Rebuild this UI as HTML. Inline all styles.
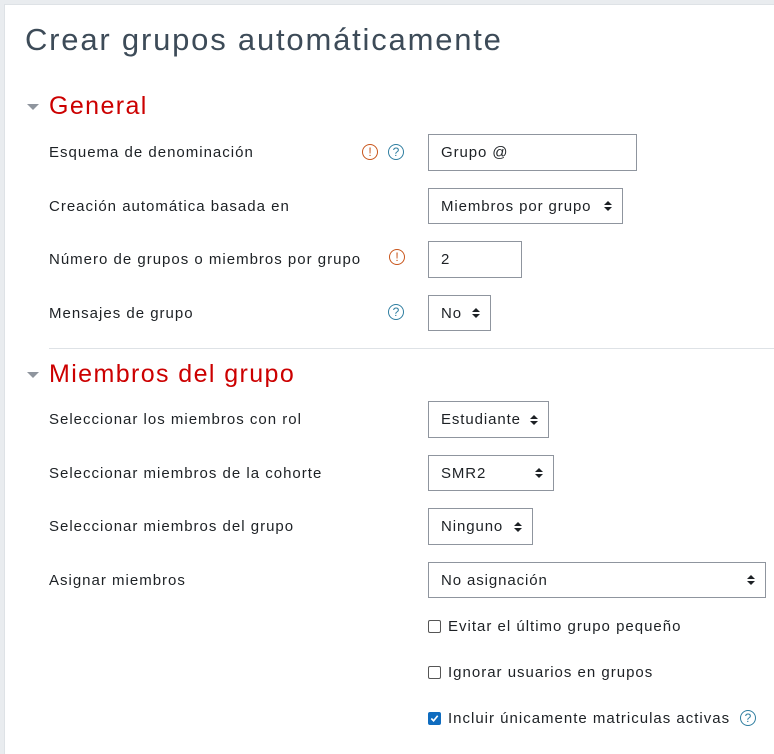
<!DOCTYPE html>
<html><head><meta charset="utf-8"><style>
body{margin:0;width:774px;height:754px;background:#e9ecef;font-family:"Liberation Sans",sans-serif;overflow:hidden;position:relative}
.card{position:absolute;left:4px;top:4px;right:0;bottom:0;background:#fff;border-left:1px solid #dee2e6;border-top:1px solid #dee2e6}
.a{position:absolute;white-space:nowrap}
h1{position:absolute;left:25px;top:22px;margin:0;font-weight:normal;font-size:31px;color:#3d4b58;letter-spacing:1.8px}
.h{font-size:25px;color:#cc0000;left:49px;letter-spacing:1.4px}
.tri{position:absolute;left:27px;width:0;height:0;border-left:6px solid transparent;border-right:6px solid transparent;border-top:6px solid #8f959e}
.l{left:49px;font-size:15px;color:#1d2125;letter-spacing:1px}
.f{position:absolute;border:1px solid #8f959e;box-sizing:border-box;font-size:15px;color:#1d2125;padding-left:12px;display:flex;align-items:center;letter-spacing:0.9px}
.f .ar{position:absolute;right:10px;top:50%;margin-top:-6px;width:8px;height:12px}
.ic{position:absolute;width:16px;height:16px;border-radius:50%;box-sizing:border-box;font-size:12px;text-align:center;line-height:15px}
.ex{border:1.5px solid #c9561c;color:#c9561c}
.q{border:1.2px solid #2f7ea0;color:#2f7ea0}
.cb{position:absolute;left:428px;width:13px;height:13px;border:1px solid #555;border-radius:2px;box-sizing:border-box}
.ct{left:448px;font-size:15px;color:#1d2125;letter-spacing:1px}
</style></head><body>
<div class="card"></div>
<h1>Crear grupos automáticamente</h1>
<div class="tri" style="top:104px"></div>
<div class="a h" style="top:92px">General</div>
<div class="a l" style="top:144px">Esquema de denominación</div>
<div class="ic ex" style="left:362px;top:144px">!</div>
<div class="ic q" style="left:388px;top:144px">?</div>
<div class="f" style="left:428px;top:134px;width:209px;height:37px">Grupo @</div>

<div class="a l" style="top:198px">Creación automática basada en</div>
<div class="f" style="left:428px;top:188px;width:195px;height:36px">Miembros por grupo<svg class="ar" viewBox="0 0 8 12"><path d="M0 5L4 1L8 5ZM0 7L4 11L8 7Z" fill="#1d2125"/></svg></div>

<div class="a l" style="top:251px">Número de grupos o miembros por grupo</div>
<div class="ic ex" style="left:389px;top:249px">!</div>
<div class="f" style="left:428px;top:241px;width:94px;height:37px">2</div>

<div class="a l" style="top:305px">Mensajes de grupo</div>
<div class="ic q" style="left:388px;top:304px">?</div>
<div class="f" style="left:428px;top:295px;width:63px;height:36px">No<svg class="ar" viewBox="0 0 8 12"><path d="M0 5L4 1L8 5ZM0 7L4 11L8 7Z" fill="#1d2125"/></svg></div>

<div style="position:absolute;left:49px;right:0;top:348px;border-top:1px solid #dee2e6"></div>
<div class="tri" style="top:372px"></div>
<div class="a h" style="top:360px">Miembros del grupo</div>

<div class="a l" style="top:411px">Seleccionar los miembros con rol</div>
<div class="f" style="left:428px;top:401px;width:121px;height:37px">Estudiante<svg class="ar" viewBox="0 0 8 12"><path d="M0 5L4 1L8 5ZM0 7L4 11L8 7Z" fill="#1d2125"/></svg></div>

<div class="a l" style="top:465px">Seleccionar miembros de la cohorte</div>
<div class="f" style="left:428px;top:455px;width:126px;height:36px">SMR2<svg class="ar" viewBox="0 0 8 12"><path d="M0 5L4 1L8 5ZM0 7L4 11L8 7Z" fill="#1d2125"/></svg></div>

<div class="a l" style="top:518px">Seleccionar miembros del grupo</div>
<div class="f" style="left:428px;top:508px;width:105px;height:37px">Ninguno<svg class="ar" viewBox="0 0 8 12"><path d="M0 5L4 1L8 5ZM0 7L4 11L8 7Z" fill="#1d2125"/></svg></div>

<div class="a l" style="top:572px">Asignar miembros</div>
<div class="f" style="left:428px;top:562px;width:338px;height:36px">No asignación<svg class="ar" viewBox="0 0 8 12"><path d="M0 5L4 1L8 5ZM0 7L4 11L8 7Z" fill="#1d2125"/></svg></div>

<div class="cb" style="top:620px"></div>
<div class="a ct" style="top:618px">Evitar el último grupo pequeño</div>
<div class="cb" style="top:666px"></div>
<div class="a ct" style="top:664px">Ignorar usuarios en grupos</div>
<div class="cb" style="top:712px;background:#0f6cbf;border-color:#0f6cbf"><svg viewBox="0 0 12 12" width="11" height="11" style="position:absolute;left:0;top:0"><path d="M2.5 6L5 8.5L9.5 3" stroke="#fff" stroke-width="1.8" fill="none"/></svg></div>
<div class="a ct" style="top:710px">Incluir únicamente matriculas activas</div>
<div class="ic q" style="left:740px;top:710px">?</div>
</body></html>
